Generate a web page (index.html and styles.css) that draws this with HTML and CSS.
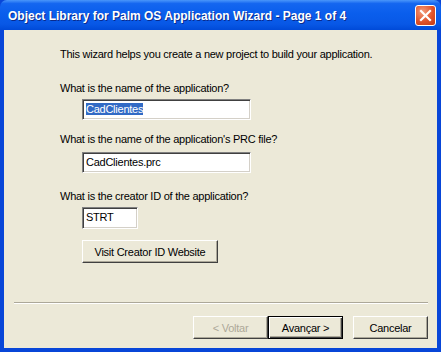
FILE: index.html
```
<!DOCTYPE html>
<html lang="en">
<head>
    <meta charset="UTF-8">
    <title>Object Library for Palm OS Application Wizard</title>
    <link rel="stylesheet" href="styles.css">
</head>
<body>
    <div class="window">
        <div class="title-bar">
            <span class="title-text">Object Library for Palm OS Application Wizard - Page 1 of 4</span>
            <div class="close-btn">
                <svg width="13" height="13" viewBox="0 0 13 13">
                    <path d="M2 2 L11 11 M11 2 L2 11" stroke="#fff" stroke-width="2.2" stroke-linecap="square"/>
                </svg>
            </div>
        </div>

        <div class="client">
            <div class="page">
                <p class="intro">This wizard helps you create a new project to build your application.</p>

                <label class="field-label first">What is the name of the application?</label>
                <div class="textbox wide"><span class="selected">CadClientes</span></div>

                <label class="field-label second">What is the name of the application's PRC file?</label>
                <div class="textbox wide">CadClientes.prc</div>

                <label class="field-label third">What is the creator ID of the application?</label>
                <div class="textbox short">STRT</div>

                <div class="btn visit-btn">Visit Creator ID Website</div>
            </div>

            <div class="footer">
                <div class="separator"></div>
                <div class="button-row">
                    <div class="btn disabled">&lt; Voltar</div>
                    <div class="btn default">Avançar &gt;</div>
                    <div class="btn cancel">Cancelar</div>
                </div>
            </div>
        </div>
    </div>
</body>
</html>
```
FILE: styles.css
```
body {
    margin: 0;
    background-color: #ffffff;
    font-family: "Liberation Sans", Arial, sans-serif;
    font-size: 11px;
    letter-spacing: -0.25px;
}
.window {
    width: 441px;
    height: 352px;
    background-color: #0846d8;
    display: flex;
    flex-direction: column;
    box-sizing: border-box;
    padding: 0 4px 4px 4px;
}
.title-bar {
    height: 30px;
    margin: 0 -4px;
    padding: 0 5px 0 8px;
    display: flex;
    align-items: center;
    justify-content: space-between;
    border-radius: 7px 7px 0 0;
    background: linear-gradient(to bottom, #4a96fa 0%, #1466f0 12%, #0a5eec 45%, #0858e6 80%, #004ad8 100%);
}
.title-text {
    color: #ffffff;
    font-family: "Liberation Sans", sans-serif;
    font-weight: bold;
    font-size: 12px;
    letter-spacing: 0;
    text-shadow: 1px 1px 0 #0a2a8c;
    padding-top: 1px;
}
.close-btn {
    width: 19px;
    height: 19px;
    border: 1px solid #ffffff;
    border-radius: 3px;
    background: radial-gradient(circle at 35% 30%, #f39c7c 0%, #e0532b 55%, #c33a12 100%);
    display: flex;
    align-items: center;
    justify-content: center;
}
.client {
    flex: 1;
    background-color: #ece9d8;
    display: flex;
    flex-direction: column;
}
.page {
    padding-left: 56px;
    display: flex;
    flex-direction: column;
    align-items: flex-start;
}
.intro {
    margin: 18px 0 0 0;
    line-height: 13px;
}
.field-label {
    display: block;
    line-height: 13px;
}
.field-label.first {
    margin-top: 21px;
}
.field-label.second {
    margin-top: 13px;
}
.field-label.third {
    margin-top: 17px;
}
.textbox {
    margin: 4px 0 0 22px;
    height: 21px;
    box-sizing: border-box;
    background-color: #ffffff;
    border-top: 1px solid #808080;
    border-left: 1px solid #808080;
    border-right: 1px solid #ffffff;
    border-bottom: 1px solid #ffffff;
    box-shadow: inset 1px 1px 0 #404040, inset -1px -1px 0 #d4d0c8;
    padding: 3px 0 0 3px;
    line-height: 13px;
    color: #000000;
}
.field-label.second + .textbox {
    margin-top: 6px;
}
.textbox.wide {
    width: 169px;
}
.textbox.short {
    width: 56px;
    height: 22px;
}
.selected {
    background-color: #316ac5;
    color: #ffffff;
}
.btn {
    box-sizing: border-box;
    height: 23px;
    display: flex;
    align-items: center;
    justify-content: center;
    background-color: #ece9d8;
    color: #000000;
    border-top: 1px solid #ffffff;
    border-left: 1px solid #ffffff;
    border-right: 1px solid #404040;
    border-bottom: 1px solid #404040;
    box-shadow: inset -1px -1px 0 #aca899;
}
.visit-btn {
    margin: 11px 0 0 22px;
    width: 136px;
}
.footer {
    margin-top: auto;
    padding: 0 9px 9px 10px;
}
.separator {
    height: 0;
    border-top: 1px solid #aca899;
    border-bottom: 1px solid #ffffff;
}
.button-row {
    margin-top: 12px;
    display: flex;
    justify-content: flex-end;
}
.button-row .btn {
    width: 75px;
}
.btn.disabled {
    color: #aca899;
}
.btn.default {
    border: 1px solid #000000;
    box-shadow: inset 1px 1px 0 #ffffff, inset -1px -1px 0 #404040, inset -2px -2px 0 #aca899;
}
.btn.cancel {
    margin-left: 10px;
}
```
